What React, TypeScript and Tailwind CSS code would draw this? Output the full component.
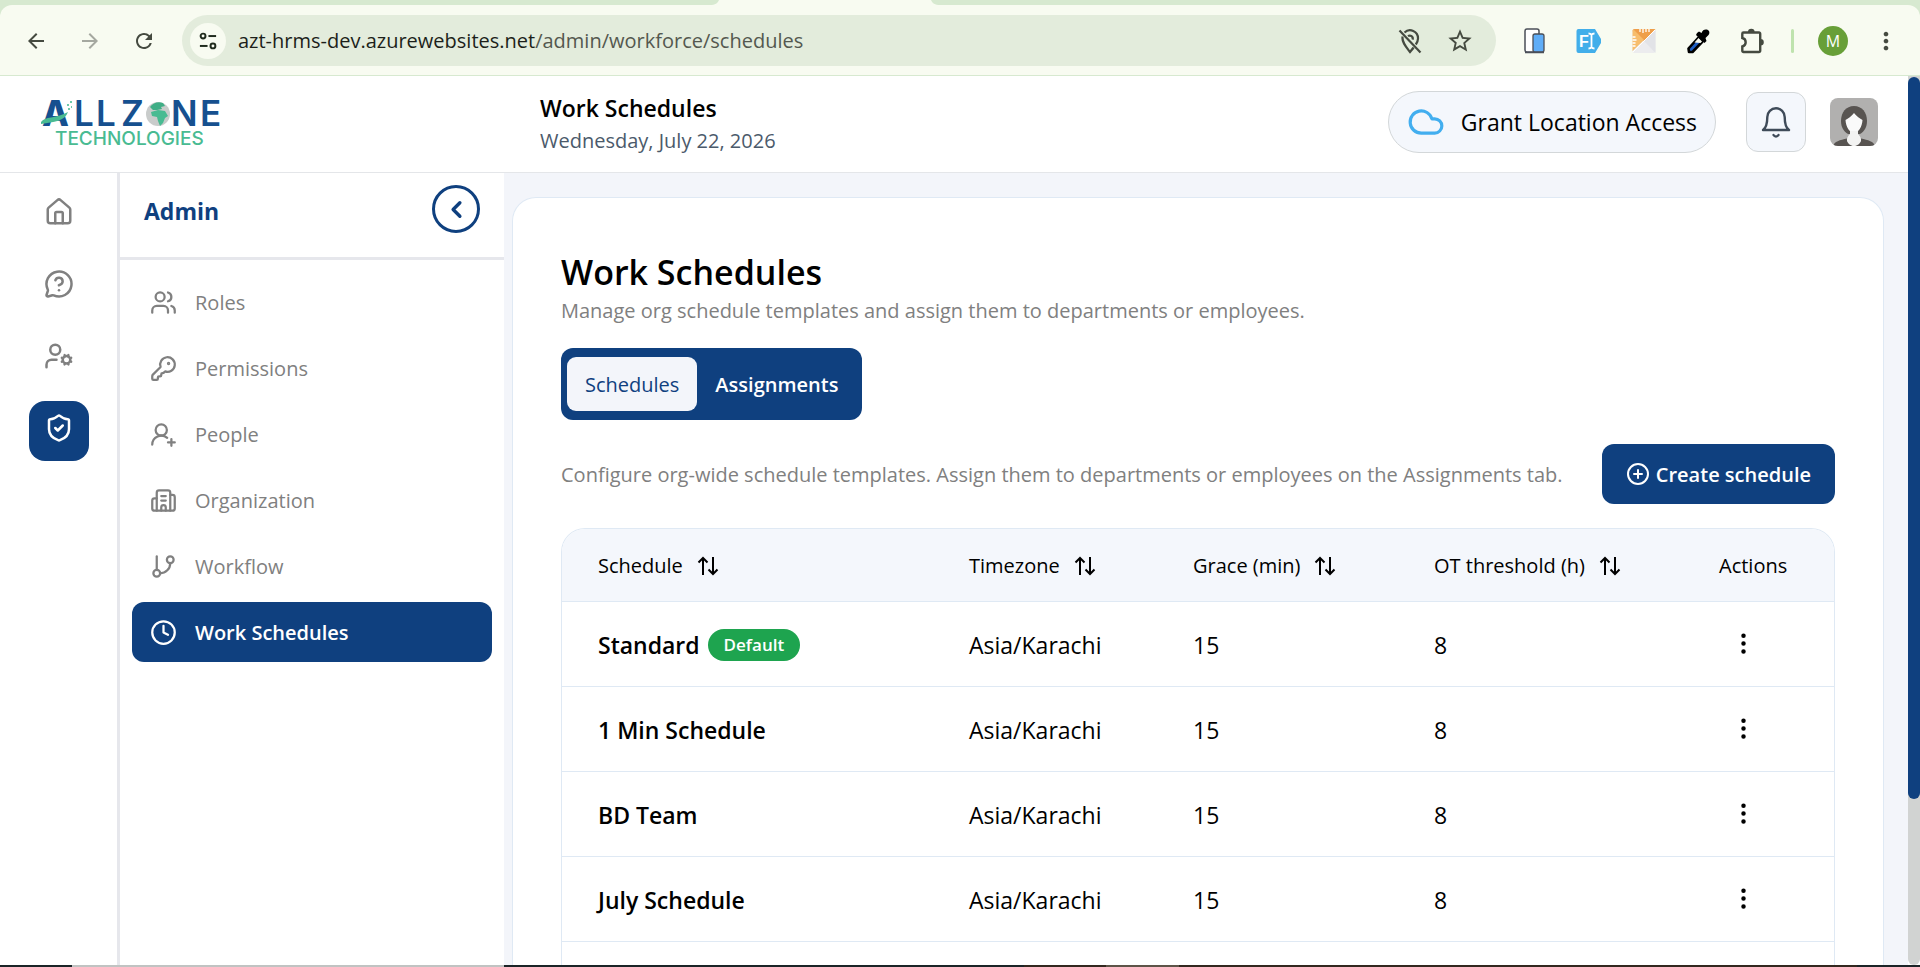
import React from 'react';
import {
  Building2,
  ChevronLeft,
  CirclePlus,
  Clock,
  Cloud,
  EllipsisVertical,
  GitBranch,
  House,
  KeyRound,
  MessageCircleQuestionMark,
  ShieldCheck,
  UserCog,
  UserRoundPlus,
  Users,
} from 'lucide-react';
import { MdArrowBack, MdArrowForward, MdMoreVert, MdRefresh, MdStarOutline } from 'react-icons/md';
import clsx from 'clsx';

const railItems = [
  { label: 'Home', icon: House, active: false },
  { label: 'Help', icon: MessageCircleQuestionMark, active: false },
  { label: 'User settings', icon: UserCog, active: false },
  { label: 'Admin', icon: ShieldCheck, active: true },
];

const menuItems = [
  { label: 'Roles', icon: Users, active: false },
  { label: 'Permissions', icon: KeyRound, active: false },
  { label: 'People', icon: UserRoundPlus, active: false },
  { label: 'Organization', icon: Building2, active: false },
  { label: 'Workflow', icon: GitBranch, active: false },
  { label: 'Work Schedules', icon: Clock, active: true },
];

const columns = [
  { label: 'Schedule', width: 'w-[371px]' },
  { label: 'Timezone', width: 'w-[224px]' },
  { label: 'Grace (min)', width: 'w-[241px]' },
  { label: 'OT threshold (h)', width: 'w-[285px]' },
];

const schedules = [
  { name: 'Standard', isDefault: true, timezone: 'Asia/Karachi', grace: 15, overtime: 8 },
  { name: '1 Min Schedule', isDefault: false, timezone: 'Asia/Karachi', grace: 15, overtime: 8 },
  { name: 'BD Team', isDefault: false, timezone: 'Asia/Karachi', grace: 15, overtime: 8 },
  { name: 'July Schedule', isDefault: false, timezone: 'Asia/Karachi', grace: 15, overtime: 8 },
];

const SortIcon = () => (
  <svg width="22" height="20" viewBox="0 0 22 20" fill="none" stroke="currentColor" strokeWidth="2">
    <path d="M6 19V2M1.5 6.5 6 2l4.5 4.5" />
    <path d="M16 1v17M11.5 13.5 16 18l4.5-4.5" />
  </svg>
);

const TuneIcon = () => (
  <svg width="18" height="18" viewBox="0 0 20 20" fill="none" stroke="#1f2a1d" strokeWidth="2.2">
    <circle cx="4.5" cy="4.5" r="2.7" />
    <path d="M10.5 4.5H19" />
    <circle cx="15.5" cy="15.5" r="2.7" />
    <path d="M1 15.5h8.5" />
  </svg>
);

const LocationOffIcon = () => (
  <svg width="24" height="26" viewBox="0 0 24 26" fill="none" stroke="#454a40" strokeWidth="2.2">
    <path d="M6.5 4.5A8 8 0 0 1 20 10.5c0 2-.8 4-2.2 6M4.6 8.5C3.5 14 8 19 12 24c1.3-1.6 2.5-3 3.6-4.5" />
    <path d="M10 8.2a3 3 0 0 1 4.6 3.4" />
    <path d="M1.5 2.5l21 22" />
  </svg>
);

const DevicesIcon = () => (
  <svg width="22" height="26" viewBox="0 0 22 26">
    <rect x="1" y="1" width="14" height="23" rx="2" fill="#fff" stroke="#4b4f58" strokeWidth="1.5" />
    <rect x="9" y="6" width="11" height="18" rx="2" fill="#5fadf8" stroke="#4b4f58" strokeWidth="1.3" />
    <path d="M1 24.5h19" stroke="#4b4f58" strokeWidth="1.5" />
  </svg>
);

const FontIcon = () => (
  <svg width="26" height="26" viewBox="0 0 26 26">
    <path d="M2.5 1H19l6 10v4l-6 10H2.5a2 2 0 0 1-2-2V3a2 2 0 0 1 2-2Z" fill="#42aeea" />
    <text x="3" y="18.5" fill="#fff" fontSize="16" fontWeight="700" fontFamily="Liberation Sans, sans-serif">F</text>
    <path
      d="M12.5 5.5c1.5 0 2.5.4 3 1.2.5-.8 1.5-1.2 3-1.2M12.5 20.5c1.5 0 2.5-.4 3-1.2.5.8 1.5 1.2 3 1.2M15.5 6.5v13"
      fill="none"
      stroke="#fff"
      strokeWidth="1.8"
    />
  </svg>
);

const RulerIcon = () => (
  <svg width="24" height="26" viewBox="0 0 24 26">
    <rect x=".5" y="1" width="23" height="24" rx="2" fill="#ececee" />
    <path d="M.5 3a2 2 0 0 1 2-2h21L12 13Z" fill="#ef9f4a" />
    <path d="M.5 3v20L12 12 1.5 1.5Z" fill="#f7bd6c" />
    <path d="m12 13 11.5 12V2Z" fill="#e2e3e7" />
    <path d="M8 1v3M11 1v4M14 1v3M17 1v3M.5 9h3M.5 12h4M.5 15h3M.5 18h3" stroke="#fff" strokeWidth="1.3" />
    <path d="M1 24 23 2" stroke="#fff" strokeWidth="1" />
  </svg>
);

const EyedropperIcon = () => (
  <svg width="24" height="26" viewBox="0 0 24 26">
    <path d="M3 24l-.5-3.5 10-11 4 4L6.5 24Z" fill="#1f5fc4" stroke="#000" strokeWidth="2.6" strokeLinejoin="round" />
    <path d="M8.5 14.5l4-4.5 3.5 3.5-1.5 1.5Z" fill="#f8fbf1" />
    <path d="m11 5 2-1.5L15.5 5c1-3 3-4 5.5-3.5 2.5.8 3 3.5 1.5 5.5l-3 3 1 3-2 2L10 7Z" fill="#000" />
  </svg>
);

const PuzzleIcon = () => (
  <svg width="25" height="26" viewBox="0 0 25 26">
    <path
      d="M3.5 4.5H19a1.2 1.2 0 0 1 1.2 1.2v17.1A1.2 1.2 0 0 1 19 24H3.5a1.2 1.2 0 0 1-1.2-1.2v-4.3c4.5-1 4.5-7.5 0-8.5V5.7a1.2 1.2 0 0 1 1.2-1.2Z"
      fill="none"
      stroke="#454a40"
      strokeWidth="2.4"
    />
    <path d="M8 4a3.3 3.3 0 0 1 6.6 0ZM20.5 11a3.3 3.3 0 0 1 0 6.6Z" fill="#454a40" />
  </svg>
);

const BellIcon = () => (
  <svg
    width="30"
    height="32"
    viewBox="0 0 30 32"
    fill="none"
    stroke="#3f4b59"
    strokeWidth="2.4"
    strokeLinecap="round"
    strokeLinejoin="round"
  >
    <path d="M2 24c3.500-2.500 4.300-7 4.300-13a8.700 8.700 0 0 1 17.400 0c0 6 .8 10.500 4.300 13Z" />
    <path d="M12.500 29c1.200 2 3.800 2 5 0" />
  </svg>
);

const AvatarPicture = () => (
  <svg className="size-12 rounded-lg" viewBox="0 0 48 48" role="img" aria-label="Profile">
    <rect width="48" height="48" fill="#b1b0af" />
    <path d="M24 8c-8 0-13 6.5-13 15 0 6 2.5 10.5 7 13h12c4.500-2.500 7-7 7-13 0-8.500-5-15-13-15Z" fill="#585451" />
    <path d="M3 48c1-4.500 7-6 14-7.500h14c7 1.500 13 3 14 7.500Z" fill="#585451" />
    <path d="M24 15c-2.500 3.500-6 5.500-8.500 7 .3 7 4.500 13 8.500 13s8.200-6 8.500-13c-2.500-1.500-6-3.500-8.500-7Z" fill="#fafafa" />
    <path d="M20 33v3c-2 2-3.500 4-3 7 1 2.500 3.500 5 7 5s6-2.500 7-5c.5-3-1-5-3-7v-3Z" fill="#f3f3f2" />
  </svg>
);

const Logo = () => (
  <svg width="190" height="64" viewBox="0 -8 190 64" role="img" aria-label="Allzone Technologies">
    <g fill="#16508f" fontFamily="Inter, sans-serif" fontSize="35" fontWeight="600">
      <text x="2" y="26" fontWeight="800">A</text>
      <text x="34" y="26">L</text>
      <text x="56" y="26">L</text>
      <text x="81" y="26">Z</text>
      <text x="131" y="26">N</text>
      <text x="160" y="26">E</text>
    </g>
    <path d="M1 22c4-6 14-3 27-10-3 9-14 10-27 12Z" fill="#49bb92" />
    <path d="M27 4h2v2h-2ZM30 1h2v2h-2ZM28 8h2v2h-2ZM31 6h1v2h-1Z" fill="#6fcbaa" />
    <circle cx="118" cy="14" r="12" fill="#c9cccb" />
    <path d="M110 7c3-4 8-6 13-4l2 3-4 1 1 2-5 1-4 0Z" fill="#3fae86" />
    <path d="M111 12l7-2 7 1 3 5-3 2-2 5-3 3-2-5-1-4-5-1Z" fill="#49bb92" />
    <text x="15" y="45" fill="#49bb92" fontSize="19" fontWeight="500" fontFamily="Inter, sans-serif">
      TECHNOLOGIES
    </text>
  </svg>
);

const BrowserBar = () => (
  <div className="bg-[#d7e9d0]">
    {/* Foot of the open tab */}
    <svg className="ml-[37%] block h-[5px] w-[230px]" viewBox="0 0 230 5" preserveAspectRatio="none">
      <path d="M0 5C5 5 8 3 9 0h212c1 3 4 5 9 5Z" fill="#f8fbf1" />
    </svg>
    <div className="flex items-center rounded-t-xl border-b border-[#d7e9d0] bg-[#f8fbf1] pt-[10px] pb-[9px] pl-6 pr-5">
      <div className="flex items-center gap-[30px] text-2xl text-[#454a40]">
        <button aria-label="Back"><MdArrowBack /></button>
        <button aria-label="Forward" className="text-[#a5a8a0]"><MdArrowForward /></button>
        <button aria-label="Reload"><MdRefresh /></button>
      </div>
      <div className="ml-[26px] flex h-[51px] flex-1 items-center rounded-full bg-[#e3ecdc] pl-2 pr-[22px]">
        <button aria-label="Site information" className="flex size-9 items-center justify-center rounded-full bg-[#f8fbf1]">
          <TuneIcon />
        </button>
        <div className="ml-3 flex-1 text-xl text-[#54584f]">
          <span className="text-[#1c1f1a]">azt-hrms-dev.azurewebsites.net</span>/admin/workforce/schedules
        </div>
        <div className="flex items-center gap-6">
          <button aria-label="Location blocked"><LocationOffIcon /></button>
          <button aria-label="Bookmark" className="text-[28px] text-[#454a40]"><MdStarOutline /></button>
        </div>
      </div>
      <div className="ml-7 flex items-center gap-[30px]">
        <button aria-label="Responsive viewer"><DevicesIcon /></button>
        <button aria-label="Font finder"><FontIcon /></button>
        <button aria-label="Page ruler"><RulerIcon /></button>
        <button aria-label="Color picker"><EyedropperIcon /></button>
        <button aria-label="Extensions"><PuzzleIcon /></button>
      </div>
      <div className="ml-[26px] h-6 w-[3px] rounded-full bg-[#bfe3ae]" />
      <button className="ml-6 flex size-[30px] items-center justify-center rounded-full bg-[#689f38] text-base text-white">M</button>
      <button aria-label="Menu" className="ml-6 text-[28px] text-[#454a40]"><MdMoreVert /></button>
    </div>
  </div>
);

const Header = () => (
  <header className="flex h-[97px] shrink-0 items-center border-b border-[#e4e6e9] bg-white pl-10 pr-[30px]">
    <div className="w-[500px]">
      <Logo />
    </div>
    <div className="flex-1">
      <div className="text-[23px] leading-[34px] font-semibold text-black">Work Schedules</div>
      <div className="text-xl leading-8 text-[#4b5a6b]">Wednesday, July 22, 2026</div>
    </div>
    <div className="flex items-center pb-1">
      <button className="flex h-[62px] items-center gap-4 rounded-full border border-[#d3d7d9] bg-[#f4f7fc] px-[18px] text-[23px] text-black">
        <Cloud size={38} className="text-[#42aeef]" />
        Grant Location Access
      </button>
      <button
        aria-label="Notifications"
        className="ml-[30px] flex size-[60px] items-center justify-center rounded-xl border border-[#d3d7d9] bg-[#f4f7fc]"
      >
        <BellIcon />
      </button>
      <button className="ml-6"><AvatarPicture /></button>
    </div>
  </header>
);

const Sidebar = () => (
  <aside className="flex shrink-0 bg-white">
    <nav className="flex w-[120px] flex-col items-center gap-3 border-r-[3px] border-[#e6e7ec] pt-3">
      {railItems.map(({ label, icon: Icon, active }) => (
        <a
          key={label}
          href="#"
          aria-label={label}
          className={clsx(
            'flex size-[60px] items-center justify-center rounded-2xl pb-[6px]',
            active ? 'bg-[#0f407f] text-white' : 'text-[#808080]'
          )}
        >
          <Icon size={30} />
        </a>
      ))}
    </nav>
    <div className="w-96">
      <div className="flex h-[87px] items-start justify-between border-b-[3px] border-[#e6e7ec] px-6 pt-3">
        <h2 className="text-[23px] leading-[52px] font-bold text-[#0f407f]">Admin</h2>
        <button
          aria-label="Collapse menu"
          className="flex size-12 items-center justify-center rounded-full border-[3px] border-[#0f407f] text-[#0f407f]"
        >
          <ChevronLeft size={27} strokeWidth={3} />
        </button>
      </div>
      <nav className="flex flex-col gap-[6px] px-3 pt-3">
        {menuItems.map(({ label, icon: Icon, active }) => (
          <a
            key={label}
            href="#"
            className={clsx(
              'flex h-[60px] items-center gap-[18px] rounded-xl px-[18px] text-xl',
              active ? 'bg-[#0f407f] font-semibold text-white' : 'text-[#808080]'
            )}
          >
            <Icon size={27} />
            <span className="pt-[2px]">{label}</span>
          </a>
        ))}
      </nav>
    </div>
  </aside>
);

const SchedulesTable = () => (
  <div className="mt-6 flex flex-1 flex-col overflow-hidden rounded-t-3xl border border-b-0 border-[#dfe9f4]">
    <table className="w-full text-left text-black">
      <thead className="bg-[#f4f7fc] text-xl">
        <tr className="h-[72px] border-b border-[#dfe9f4]">
          {columns.map(({ label, width }) => (
            <th key={label} className={clsx('pt-[3px] pl-9 font-medium', width)}>
              <button className="flex items-center gap-[14px]">
                {label}
                <SortIcon />
              </button>
            </th>
          ))}
          <th className="w-[151px] pt-[3px] pl-9 font-medium">Actions</th>
        </tr>
      </thead>
      <tbody className="text-[23px]">
        {schedules.map((row) => (
          <tr key={row.name} className="h-[85px] border-b border-[#dfe9f4]">
            <td className="pt-[3px] pl-9 font-semibold">
              <div className="flex items-center gap-2">
                {row.name}
                {row.isDefault && (
                  <span className="rounded-full bg-[#1ea44f] px-4 text-[17px] leading-8 text-white">Default</span>
                )}
              </div>
            </td>
            <td className="pt-[3px] pl-9">{row.timezone}</td>
            <td className="pt-[3px] pl-9">{row.grace}</td>
            <td className="pt-[3px] pl-9">{row.overtime}</td>
            <td className="pl-[47px]">
              <button aria-label={`Actions for ${row.name}`} className="block"><EllipsisVertical size={27} /></button>
            </td>
          </tr>
        ))}
      </tbody>
    </table>
  </div>
);

const App: React.FC = () => {
  return (
    <div className="flex h-screen flex-col overflow-hidden bg-white font-['Open_Sans',sans-serif]">
      <BrowserBar />
      <div className="flex min-h-0 flex-1">
        <div className="flex min-w-0 flex-1 flex-col">
          <Header />
          <div className="flex min-h-0 flex-1">
            <Sidebar />
            <main className="flex min-w-0 flex-1 bg-[#f3f5fa] pl-2 pr-6 pt-6">
              <section className="flex min-w-0 flex-1 flex-col rounded-t-3xl border border-b-0 border-[#dfe9f4] bg-white px-12 pt-12">
                <h1 className="text-[34px] leading-[52px] font-semibold text-black">Work Schedules</h1>
                <p className="text-xl leading-[26px] text-[#808080]">
                  Manage org schedule templates and assign them to departments or employees.
                </p>
                <div className="mt-6 flex self-start rounded-xl bg-[#0f407f] px-[6px] py-[9px] text-xl">
                  <button className="h-[54px] rounded-[9px] bg-[#f3f5fa] px-[18px] pt-[2px] font-medium text-[#0f407f]">
                    Schedules
                  </button>
                  <button className="h-[54px] px-[18px] pt-[2px] font-semibold text-white">Assignments</button>
                </div>
                <div className="mt-6 flex items-center justify-between gap-6">
                  <p className="pt-[2px] text-xl text-[#808080]">
                    Configure org-wide schedule templates. Assign them to departments or employees on the Assignments tab.
                  </p>
                  <button className="flex h-[60px] shrink-0 items-center gap-[6px] rounded-xl bg-[#0f407f] px-6 text-xl font-semibold text-white">
                    <CirclePlus size={24} />
                    <span className="pt-[2px]">Create schedule</span>
                  </button>
                </div>
                <SchedulesTable />
              </section>
            </main>
          </div>
        </div>
        {/* Page scrollbar */}
        <div className="w-3 rounded-b-full bg-[#d1d3d2] pt-px">
          <div className="h-13/16 rounded-full bg-[#0f407f]" />
        </div>
      </div>
      {/* Top edge of the desktop taskbar */}
      <div className="flex h-[2px] shrink-0 bg-[#1b2427]">
        <div className="w-[72px]" />
        <div className="w-[432px] bg-[#c0c3c2]" />
        <div className="w-[520px]" />
        <div className="w-[82px] bg-[#33281f]" />
        <div className="w-[73px] bg-[#5d5448]" />
        <div className="w-[678px] bg-[#33281f]" />
      </div>
    </div>
  );
};

export default App;
